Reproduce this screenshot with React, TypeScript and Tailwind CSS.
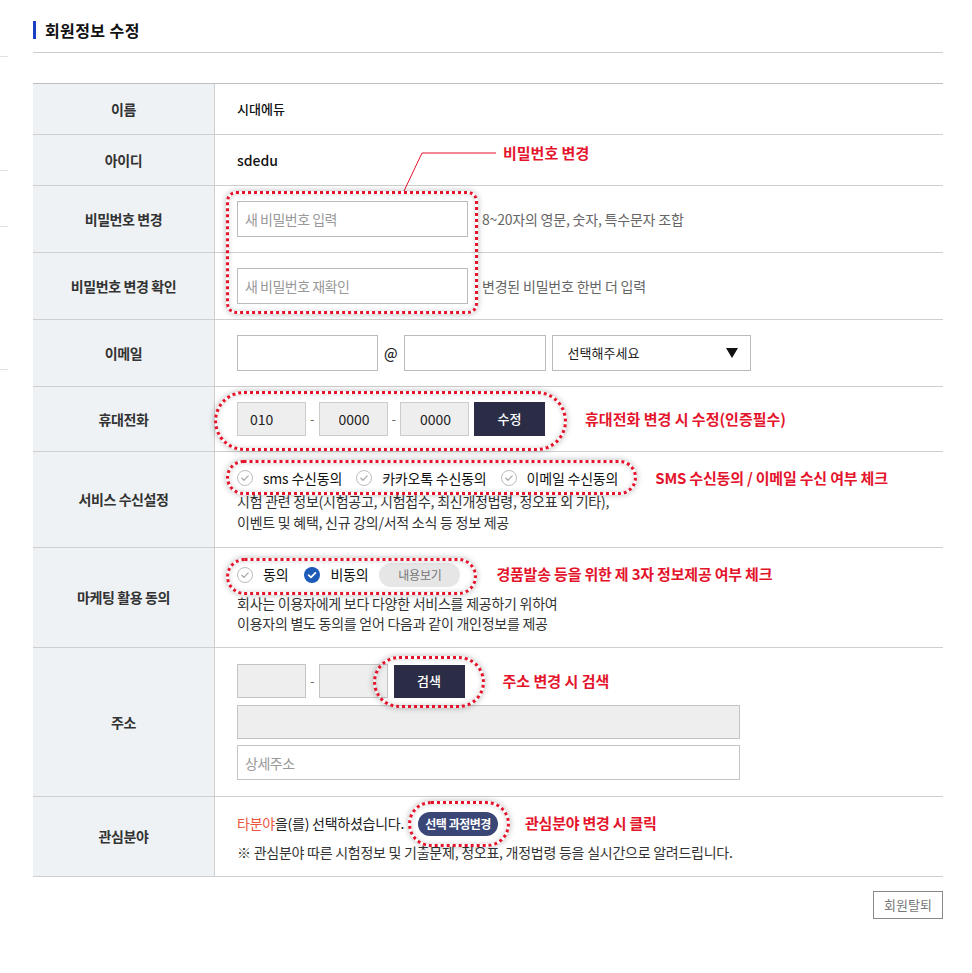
import React from "react";

const annot = "text-[15px] font-bold text-[#e3142b] whitespace-nowrap";
const dotted =
  "absolute border-[3px] border-dotted border-[#e3142b] shadow-[0_0_6px_rgba(0,0,0,0.28),inset_0_0_5px_rgba(0,0,0,0.18)] pointer-events-none";

function Row({ label, className, children }: { label: string; className: string; children: React.ReactNode }) {
  return (
    <div className={`flex border-b border-[#cfcfcf] ${className}`}>
      <div className="flex w-[182px] shrink-0 items-center justify-center border-r border-[#cfcfcf] bg-[#eff2f5] text-[14px] font-bold tracking-[-0.4px] text-[#333]">
        {label}
      </div>
      <div className="flex flex-1 items-center pl-[22px]">{children}</div>
    </div>
  );
}

function Check({ on = false }: { on?: boolean }) {
  return on ? (
    <span className="flex h-[16px] w-[16px] items-center justify-center rounded-full bg-[#1c5bb8]">
      <svg width="16" height="16" viewBox="0 0 16 16" fill="none">
        <path d="M4.6 8.2 7 10.4 11.4 5.8" stroke="#fff" strokeWidth="1.8" strokeLinecap="round" strokeLinejoin="round" />
      </svg>
    </span>
  ) : (
    <span className="flex h-[16px] w-[16px] items-center justify-center rounded-full border border-[#bdbdbd] bg-white">
      <svg width="14" height="14" viewBox="0 0 14 14" fill="none">
        <path d="M3.8 7.2 6 9.3 10.2 4.9" stroke="#a8a8a8" strokeWidth="1.2" strokeLinecap="round" strokeLinejoin="round" />
      </svg>
    </span>
  );
}

export default function App() {
  return (
    <div className="relative h-[973px] w-[972px] bg-white font-['Noto_Sans_CJK_KR','Noto_Sans',sans-serif] text-[#222]">
      {/* stray marks on the left edge */}
      <div className="absolute left-0 top-[56px] h-px w-[8px] bg-[#e2e2e2]" />
      <div className="absolute left-0 top-[170px] h-px w-[8px] bg-[#e2e2e2]" />
      <div className="absolute left-0 top-[226px] h-px w-[8px] bg-[#e2e2e2]" />
      <div className="absolute left-0 top-[369px] h-px w-[8px] bg-[#e2e2e2]" />

      <div className="pl-[33px] pr-[29px]">
        <div className="flex h-[53px] items-start border-b border-[#cccccc] pt-[21px]">
          <span className="h-[18px] w-[3px] bg-[#1b3fc4]" />
          <h1 className="ml-[9px] text-[16px] font-bold leading-[18px] tracking-[0.4px] text-[#111]">회원정보 수정</h1>
        </div>

        <div className="mt-[30px] border-t border-[#bdbdbd]">
          <Row label="이름" className="h-[51px]">
            <span className="text-[13px] font-medium text-[#111]">시대에듀</span>
          </Row>
          <Row label="아이디" className="h-[51px]">
            <span className="text-[14px] font-medium text-[#111]">sdedu</span>
          </Row>
          <Row label="비밀번호 변경" className="h-[67px]">
            <input
              className="h-[36px] w-[231px] border border-[#bbbbbb] px-[7px] text-[14px] tracking-[-0.5px] outline-none placeholder:text-[#999]"
              placeholder="새 비밀번호 입력"
            />
            <span className="ml-[14px] text-[14px] tracking-[-0.2px] text-[#666]">8~20자의 영문, 숫자, 특수문자 조합</span>
          </Row>
          <Row label="비밀번호 변경 확인" className="h-[67px]">
            <input
              className="h-[36px] w-[231px] border border-[#bbbbbb] px-[7px] text-[14px] tracking-[-0.5px] outline-none placeholder:text-[#999]"
              placeholder="새 비밀번호 재확인"
            />
            <span className="ml-[14px] text-[14px] tracking-[-0.2px] text-[#666]">변경된 비밀번호 한번 더 입력</span>
          </Row>
          <Row label="이메일" className="h-[67px]">
            <input className="h-[36px] w-[141px] border border-[#bbbbbb] outline-none" />
            <span className="mx-[6px] text-[14px] font-medium text-[#222]">@</span>
            <input className="h-[36px] w-[142px] border border-[#bbbbbb] outline-none" />
            <div className="ml-[6px] flex h-[36px] w-[199px] items-center justify-between border border-[#bbbbbb] pl-[15px] pr-[12px]">
              <span className="text-[13px] text-[#222]">선택해주세요</span>
              <svg width="12" height="10" viewBox="0 0 12 10">
                <polygon points="0,0 12,0 6,10" fill="#111" />
              </svg>
            </div>
          </Row>
          <Row label="휴대전화" className="h-[65px]">
            <input
              className="h-[34px] w-[69px] border border-[#cccccc] bg-[#eeeeee] pl-[12px] text-[14px] text-[#222] outline-none"
              defaultValue="010"
            />
            <span className="px-[4px] text-[13px] text-[#666]">-</span>
            <input
              className="h-[34px] w-[69px] border border-[#cccccc] bg-[#eeeeee] pl-[19px] text-[14px] text-[#222] outline-none"
              defaultValue="0000"
            />
            <span className="px-[4px] text-[13px] text-[#666]">-</span>
            <input
              className="h-[34px] w-[69px] border border-[#cccccc] bg-[#eeeeee] pl-[19px] text-[14px] text-[#222] outline-none"
              defaultValue="0000"
            />
            <button className="ml-[5px] h-[34px] w-[71px] bg-[#2b2d47] text-[13px] font-medium text-white">수정</button>
            <span className={`ml-[40px] ${annot}`}>휴대전화 변경 시 수정(인증필수)</span>
          </Row>
          <Row label="서비스 수신설정" className="h-[96px]">
            <div className="flex flex-col">
              <div className="flex h-[24px] items-center text-[14px] tracking-[-0.2px] text-[#111]">
                <Check />
                <span className="ml-[10px]">sms 수신동의</span>
                <span className="ml-[14px]" />
                <Check />
                <span className="ml-[10px]">카카오톡 수신동의</span>
                <span className="ml-[14px]" />
                <Check />
                <span className="ml-[10px]">이메일 수신동의</span>
                <span className={`ml-[37px] ${annot}`}>SMS 수신동의 / 이메일 수신 여부 체크</span>
              </div>
              <p className="mt-[1px] text-[14px] leading-[21px] tracking-[-0.25px] text-[#333]">
                시험 관련 정보(시험공고, 시험접수, 최신개정법령, 정오표 외 기타),
                <br />
                이벤트 및 혜택, 신규 강의/서적 소식 등 정보 제공
              </p>
            </div>
          </Row>
          <Row label="마케팅 활용 동의" className="h-[100px]">
            <div className="flex flex-col">
              <div className="flex h-[24px] items-center text-[14px] tracking-[-0.2px] text-[#111]">
                <Check />
                <span className="ml-[10px]">동의</span>
                <span className="ml-[16px]" />
                <Check on />
                <span className="ml-[10px]">비동의</span>
                <span className="ml-[11px] flex h-[24px] w-[81px] items-center justify-center rounded-full bg-[#e6e6e6] text-[12px] text-[#777]">
                  내용보기
                </span>
                <span className={`ml-[36px] ${annot}`}>경품발송 등을 위한 제 3자 정보제공 여부 체크</span>
              </div>
              <p className="mt-[6px] text-[14px] leading-[20px] tracking-[-0.25px] text-[#333]">
                회사는 이용자에게 보다 다양한 서비스를 제공하기 위하여
                <br />
                이용자의 별도 동의를 얻어 다음과 같이 개인정보를 제공
              </p>
            </div>
          </Row>
          <Row label="주소" className="h-[149px]">
            <div className="flex flex-col">
              <div className="flex items-center">
                <input className="h-[34px] w-[69px] border border-[#c4c4c4] bg-[#eeeeee] outline-none" />
                <span className="px-[4px] text-[13px] text-[#666]">-</span>
                <input className="h-[34px] w-[69px] border border-[#c4c4c4] bg-[#eeeeee] outline-none" />
                <button className="ml-[6px] h-[33px] w-[71px] bg-[#2b2d47] text-[13px] font-medium text-white">검색</button>
                <span className={`ml-[38px] ${annot}`}>주소 변경 시 검색</span>
              </div>
              <input className="mt-[7px] h-[34px] w-[503px] border border-[#c4c4c4] bg-[#eeeeee] outline-none" />
              <input
                className="mt-[6px] h-[35px] w-[503px] border border-[#c4c4c4] px-[7px] text-[14px] tracking-[-0.5px] outline-none placeholder:text-[#999]"
                placeholder="상세주소"
              />
            </div>
          </Row>
          <Row label="관심분야" className="h-[80px]">
            <div className="flex flex-col">
              <div className="flex h-[24px] items-center text-[14px] tracking-[-0.25px] text-[#222]">
                <span className="text-[#ec5640]">타분야</span>
                <span>을(를) 선택하셨습니다.</span>
                <span className="ml-[14px] flex h-[24px] w-[80px] items-center justify-center rounded-full bg-[#3a4676] text-[12px] font-bold tracking-[-0.5px] text-white">
                  선택 과정변경
                </span>
                <span className={`ml-[27px] ${annot}`}>관심분야 변경 시 클릭</span>
              </div>
              <p className="mt-[6px] text-[14px] leading-[20px] tracking-[-0.25px] text-[#333]">
                ※ 관심분야 따른 시험정보 및 기출문제, 정오표, 개정법령 등을 실시간으로 알려드립니다.
              </p>
            </div>
          </Row>
        </div>

        <div className="mt-[14px] flex justify-end">
          <button className="h-[28px] w-[70px] border border-[#888] text-[13px] text-[#777]">회원탈퇴</button>
        </div>
      </div>

      {/* annotation layer */}
      <svg className="pointer-events-none absolute left-0 top-0" width="972" height="973">
        <polyline points="404,191 422,153 496,153" fill="none" stroke="#e3142b" strokeWidth="1" />
      </svg>
      <span className={`absolute left-[503px] top-[143px] leading-[20px] ${annot}`}>비밀번호 변경</span>
      <div className={`${dotted} left-[226px] top-[191px] h-[123px] w-[252px] rounded-[10px]`} />
      <div className={`${dotted} left-[214px] top-[391px] h-[60px] w-[353px] rounded-[30px]`} />
      <div className={`${dotted} left-[226px] top-[460px] h-[35px] w-[411px] rounded-full`} />
      <div className={`${dotted} left-[226px] top-[558px] h-[37px] w-[251px] rounded-full`} />
      <div className={`${dotted} left-[373px] top-[656px] h-[52px] w-[112px] rounded-[26px]`} />
      <div className={`${dotted} left-[408px] top-[801px] h-[46px] w-[102px] rounded-[23px]`} />
    </div>
  );
}
